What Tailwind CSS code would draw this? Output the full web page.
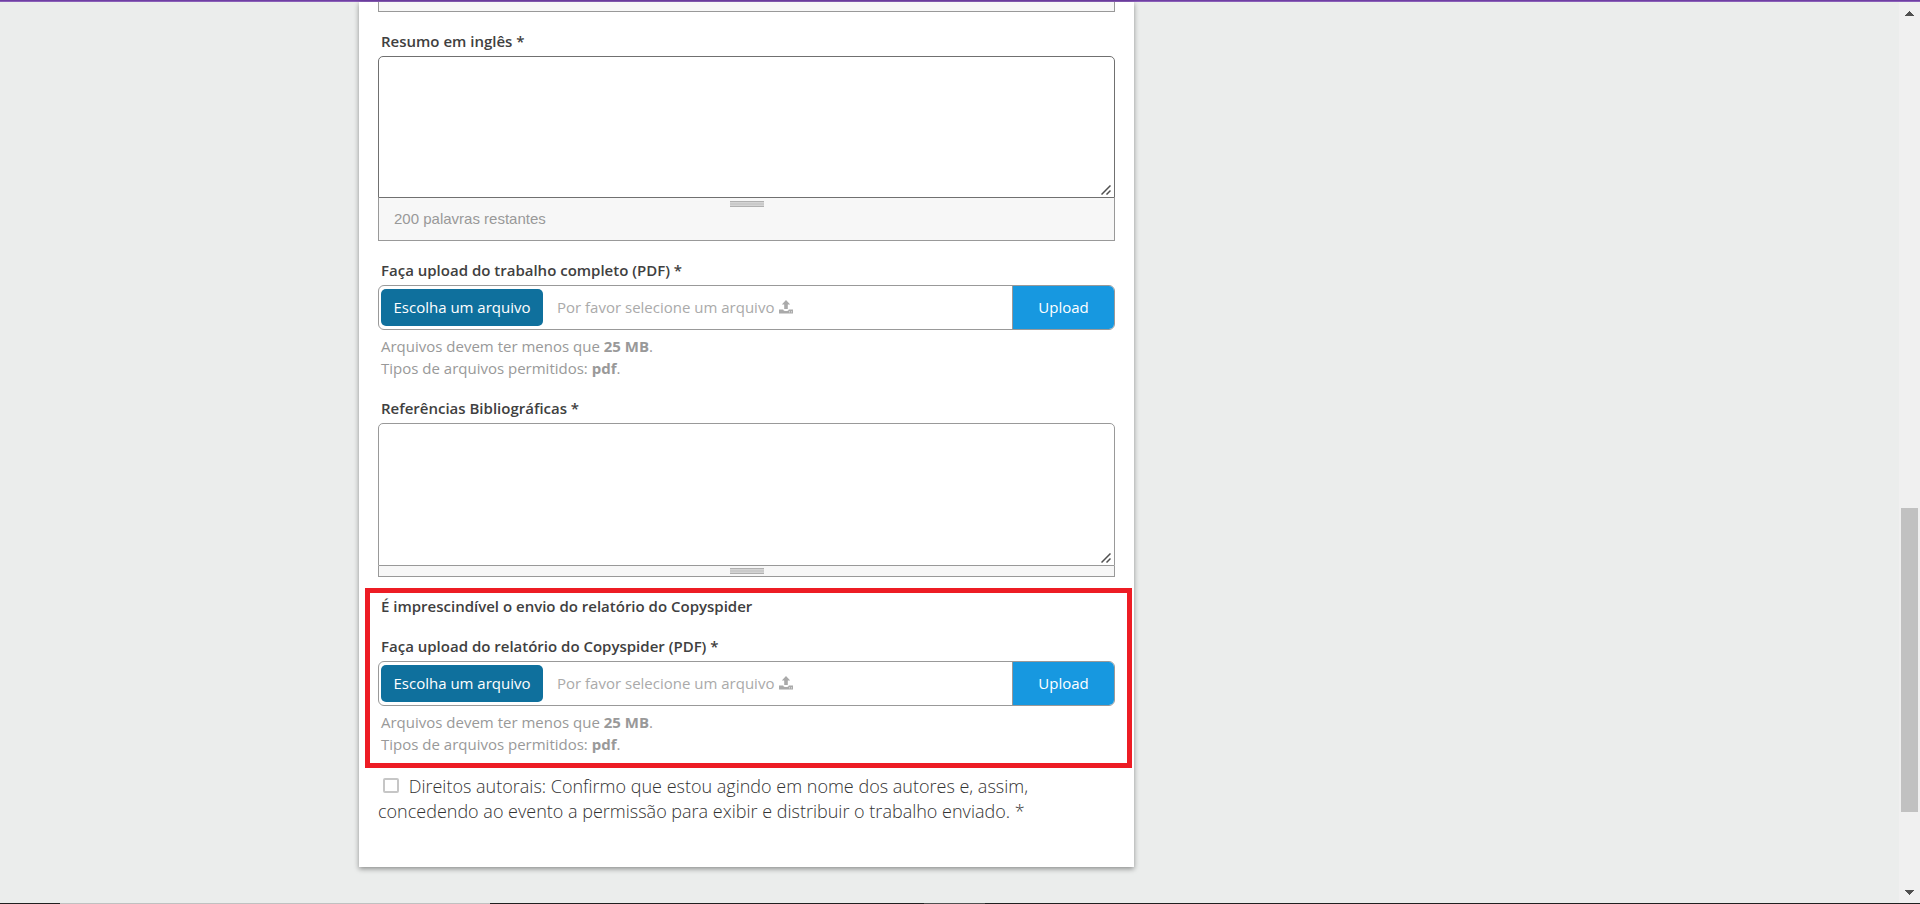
<!DOCTYPE html>
<html lang="pt-BR">
<head>
<meta charset="utf-8">
<meta name="viewport" content="width=device-width, initial-scale=1">
<title>Submissão de trabalho</title>
<script src="https://cdn.jsdelivr.net/npm/@tailwindcss/browser@4"></script>
</head>
<body class="flex h-screen flex-col overflow-hidden bg-[#ebedec] font-['Open_Sans',sans-serif] text-[15px] leading-[22px] text-[#404040]">
  <div class="h-[2px] shrink-0 border-b border-[#8a5fb8] bg-[#6f3fa3]"></div>

  <div class="flex min-h-0 flex-1">
    <main class="min-w-0 flex-1">
      <div class="mx-auto max-w-[1181px]">
        <form class="w-full max-w-[775px] bg-white px-[19px] pb-[43px] shadow-[0_2px_5px_rgba(0,0,0,0.4)]">
          <!-- Lower edge of the previous text area's grip -->
          <div class="h-[10px] border-x border-b border-[#999] bg-[#f7f7f7]"></div>

          <section class="mt-[18px]">
            <label for="resumo" class="block pl-[3px] font-semibold">Resumo em inglês *</label>
            <div class="relative mt-1">
              <textarea id="resumo" class="block h-[142px] w-full resize-none rounded-t-[5px] border border-[#707070] bg-white p-3 outline-none"></textarea>
              <svg class="absolute right-1 bottom-[3px] h-[10px] w-[10px] stroke-[#505050]" viewBox="0 0 10 10" fill="none" stroke-width="1.500" aria-hidden="true"><path d="M0.500 9.500 9.500 0.500M5.500 9.500 9.500 5.500"/></svg>
            </div>
            <div class="h-[43px] border-x border-b border-[#999] bg-[#f7f7f7] pt-[3px]">
              <div class="mx-auto h-[6px] w-[34px] border-y border-[#b0b0b0] bg-[#d4d4d4] py-px"><div class="h-[2px] bg-[#cacaca]"></div></div>
              <p class="pl-[15px] font-['Liberation_Sans',sans-serif] leading-6 text-[#999]">200 palavras restantes</p>
            </div>
          </section>

          <section class="mt-[18px]">
            <p id="trabalho-title" class="pl-[3px] font-semibold">Faça upload do trabalho completo (PDF) *</p>
            <div class="mt-1 flex h-[45px] items-stretch overflow-hidden rounded-[6px] border border-[#999]">
              <div class="flex flex-1 items-center pl-[2px]">
                <input id="trabalho" type="file" accept=".pdf" class="sr-only" aria-describedby="trabalho-title">
                <label for="trabalho" class="flex h-[37px] w-[162px] items-center justify-center rounded-[5px] bg-[#0f709d] pb-[2px] text-white">Escolha um arquivo</label>
                <span class="ml-[14px] pb-[2px] text-[#aaa]">Por favor selecione um arquivo</span>
                <svg class="mb-[2px] ml-[5px] h-[14px] w-[14px] fill-[#aaa]" viewBox="0 0 14 14" aria-hidden="true"><path d="M7 0 11.200 4.600H8.800V9H5.200V4.600H2.800ZM0 9.500H4.200C4.400 10.500 5.500 11 7 11S9.600 10.500 9.800 9.500H14V13.500H0ZM10 11.500V12.300H11V11.500ZM12 11.500V12.300H13V11.500Z" fill-rule="evenodd"/></svg>
              </div>
              <button type="button" class="w-[102px] border-l border-[#999] bg-[#1798e0] pb-[2px] text-white">Upload</button>
            </div>
            <p class="mt-[5px] pl-[3px] text-[#999]">Arquivos devem ter menos que <strong>25 MB</strong>.<br>Tipos de arquivos permitidos: <strong>pdf</strong>.</p>
          </section>

          <section class="mt-[18px]">
            <label for="referencias" class="block pl-[3px] font-semibold">Referências Bibliográficas *</label>
            <div class="relative mt-1">
              <textarea id="referencias" class="block h-[143px] w-full resize-none rounded-t-[5px] border border-[#999] bg-white p-3 outline-none"></textarea>
              <svg class="absolute right-1 bottom-[3px] h-[10px] w-[10px] stroke-[#505050]" viewBox="0 0 10 10" fill="none" stroke-width="1.500" aria-hidden="true"><path d="M0.500 9.500 9.500 0.500M5.500 9.500 9.500 5.500"/></svg>
            </div>
            <div class="h-[11px] border-x border-b border-[#999] bg-[#f7f7f7] pt-[2px]">
              <div class="mx-auto h-[6px] w-[34px] border-y border-[#b0b0b0] bg-[#d4d4d4] py-px"><div class="h-[2px] bg-[#cacaca]"></div></div>
            </div>
          </section>

          <!-- Highlighted requirement -->
          <section class="-mr-[17px] -ml-[13px] mt-[11px] border-5 border-[#ed1c24] pt-[2px] pr-3 pb-2 pl-2">
            <h2 class="pl-[3px] font-semibold">É imprescindível o envio do relatório do Copyspider</h2>
            <p id="relatorio-title" class="mt-[18px] pl-[3px] font-semibold">Faça upload do relatório do Copyspider (PDF) *</p>
            <div class="mt-1 flex h-[45px] items-stretch overflow-hidden rounded-[6px] border border-[#999]">
              <div class="flex flex-1 items-center pl-[2px]">
                <input id="relatorio" type="file" accept=".pdf" class="sr-only" aria-describedby="relatorio-title">
                <label for="relatorio" class="flex h-[37px] w-[162px] items-center justify-center rounded-[5px] bg-[#0f709d] pb-[2px] text-white">Escolha um arquivo</label>
                <span class="ml-[14px] pb-[2px] text-[#aaa]">Por favor selecione um arquivo</span>
                <svg class="mb-[2px] ml-[5px] h-[14px] w-[14px] fill-[#aaa]" viewBox="0 0 14 14" aria-hidden="true"><path d="M7 0 11.200 4.600H8.800V9H5.200V4.600H2.800ZM0 9.500H4.200C4.400 10.500 5.500 11 7 11S9.600 10.500 9.800 9.500H14V13.500H0ZM10 11.500V12.300H11V11.500ZM12 11.500V12.300H13V11.500Z" fill-rule="evenodd"/></svg>
              </div>
              <button type="button" class="w-[102px] border-l border-[#999] bg-[#1798e0] pb-[2px] text-white">Upload</button>
            </div>
            <p class="mt-[5px] pl-[3px] text-[#999]">Arquivos devem ter menos que <strong>25 MB</strong>.<br>Tipos de arquivos permitidos: <strong>pdf</strong>.</p>
          </section>

          <p class="mt-[6px] text-[18px] leading-[25px] font-[330] text-[#333]">
            <input id="direitos" type="checkbox" class="mr-[5px] ml-[5px] h-[15px] w-4 appearance-none rounded-[2px] border-2 border-[#c6c6c6] bg-white">
            <label for="direitos">Direitos autorais: Confirmo que estou agindo em nome dos autores e, assim, concedendo ao evento a permissão para exibir e distribuir o trabalho enviado. *</label>
          </p>
        </form>
      </div>
    </main>

    <!-- Window scroll bar -->
    <div class="flex w-[21px] shrink-0 flex-col items-center bg-[#f0f0f0] pt-[9px] pb-2" aria-hidden="true">
      <svg class="h-[5px] w-[9px] fill-[#505050]" viewBox="0 0 9 5"><path d="M4 0H5V1H6V2H7V3H8V4H9V5H0V4H1V3H2V2H3V1H4Z"/></svg>
      <div class="flex w-full flex-1 flex-col items-center">
        <div class="grow-[492]"></div>
        <div class="w-[17px] grow-[304] bg-[#c1c1c1]"></div>
        <div class="grow-[78]"></div>
      </div>
      <svg class="h-[5px] w-[9px] fill-[#505050]" viewBox="0 0 9 5"><path d="M0 0H9V1H8V2H7V3H6V4H5V5H4V4H3V3H2V2H1V1H0Z"/></svg>
    </div>
  </div>

  <!-- Top edge of the task bar -->
  <div class="flex h-px shrink-0 bg-[#202020]">
    <div class="ml-[60px] w-[430px] bg-[#c0c0c0]"></div>
    <div class="ml-[434px] w-[61px] bg-[#505050]"></div>
  </div>
</body>
</html>
